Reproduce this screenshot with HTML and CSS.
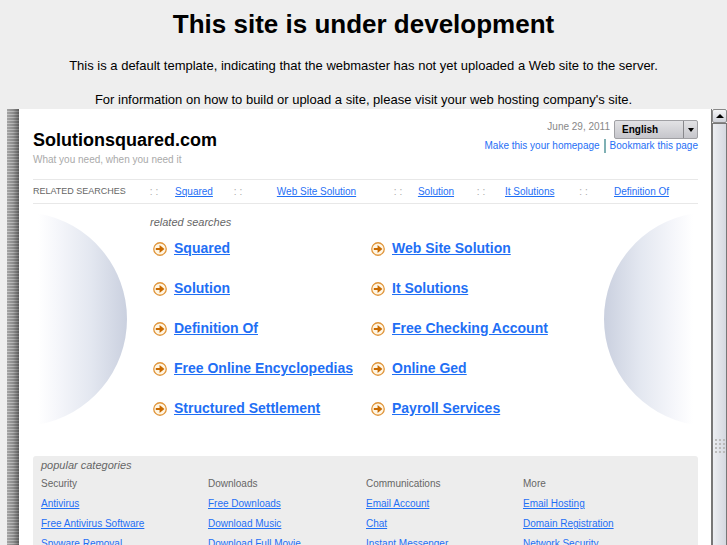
FILE: index.html
```
<!DOCTYPE html>
<html lang="en">
<head>
	<meta charset="UTF-8">
	<meta name="viewport" content="width=device-width">
	<title>This site is under development</title>

	<link rel="stylesheet" href="styles.css">
</head>

<body>

<header class="notice">
	<h1>This site is under development</h1>
	<p>This is a default template, indicating that the webmaster has not yet uploaded a Web site to the server.</p>
	<p>For information on how to build or upload a site, please visit your web hosting company's site.</p>
</header>

<!-- shared shapes -->
<svg class="defs" width="0" height="0" aria-hidden="true">
	<symbol id="arrow" viewBox="0 0 13 13">
		<circle cx="6.5" cy="6.5" r="5.8" fill="#fff6e4" stroke="#e0953a" stroke-width="1.2"/>
		<path d="M2.6 5.5h3.5V2.8L10.6 6.5 6.1 10.2V7.5H2.6z" fill="#c96a00"/>
	</symbol>
	<linearGradient id="fade">
		<stop offset="0" stop-color="#fff"/>
		<stop offset="0.2" stop-color="#f6f7fb"/>
		<stop offset="0.6" stop-color="#e3e7f0"/>
		<stop offset="1" stop-color="#cad0df"/>
	</linearGradient>
	<symbol id="dome" viewBox="0 0 90 214">
		<path d="M0 1.5A107 107 0 0 1 89 107A107 107 0 0 1 0 212.5z" fill="url(#fade)"/>
	</symbol>
</svg>

<div class="frame">
	<div class="binding"></div>

	<main class="page">
		<div class="masthead">
			<div>
				<h2>Solutionsquared.com</h2>
				<p class="tagline">What you need, when you need it</p>
			</div>
			<div class="tools">
				<div class="tools-row">
					<span class="date">June 29, 2011</span>
					<span class="language">
						<select aria-label="Language">
							<option>English</option>
						</select>
					</span>
				</div>
				<div class="tools-links">
					<a href="#">Make this your homepage</a>
					<a href="#">Bookmark this page</a>
				</div>
			</div>
		</div>

		<nav class="related">
			<span class="related-title">RELATED SEARCHES</span>
			<span class="sep">: :</span><a href="#">Squared</a>
			<span class="sep">: :</span><a href="#">Web Site Solution</a>
			<span class="sep">: :</span><a href="#">Solution</a>
			<span class="sep">: :</span><a href="#">It Solutions</a>
			<span class="sep">: :</span><a href="#">Definition Of</a>
		</nav>

		<section class="searches">
			<svg class="dome" aria-hidden="true"><use href="#dome"/></svg>
			<div class="searches-body">
				<h3>related searches</h3>
				<ul>
					<li><svg class="arrow" aria-hidden="true"><use href="#arrow"/></svg><a href="#">Squared</a></li>
					<li><svg class="arrow" aria-hidden="true"><use href="#arrow"/></svg><a href="#">Web Site Solution</a></li>
					<li><svg class="arrow" aria-hidden="true"><use href="#arrow"/></svg><a href="#">Solution</a></li>
					<li><svg class="arrow" aria-hidden="true"><use href="#arrow"/></svg><a href="#">It Solutions</a></li>
					<li><svg class="arrow" aria-hidden="true"><use href="#arrow"/></svg><a href="#">Definition Of</a></li>
					<li><svg class="arrow" aria-hidden="true"><use href="#arrow"/></svg><a href="#">Free Checking Account</a></li>
					<li><svg class="arrow" aria-hidden="true"><use href="#arrow"/></svg><a href="#">Free Online Encyclopedias</a></li>
					<li><svg class="arrow" aria-hidden="true"><use href="#arrow"/></svg><a href="#">Online Ged</a></li>
					<li><svg class="arrow" aria-hidden="true"><use href="#arrow"/></svg><a href="#">Structured Settlement</a></li>
					<li><svg class="arrow" aria-hidden="true"><use href="#arrow"/></svg><a href="#">Payroll Services</a></li>
				</ul>
			</div>
			<svg class="dome dome-right" aria-hidden="true"><use href="#dome"/></svg>
		</section>

		<section class="popular">
			<h3>popular categories</h3>
			<div class="popular-columns">
				<div>
					<h4>Security</h4>
					<a href="#">Antivirus</a>
					<a href="#">Free Antivirus Software</a>
					<a href="#">Spyware Removal</a>
				</div>
				<div>
					<h4>Downloads</h4>
					<a href="#">Free Downloads</a>
					<a href="#">Download Music</a>
					<a href="#">Download Full Movie</a>
				</div>
				<div>
					<h4>Communications</h4>
					<a href="#">Email Account</a>
					<a href="#">Chat</a>
					<a href="#">Instant Messenger</a>
				</div>
				<div>
					<h4>More</h4>
					<a href="#">Email Hosting</a>
					<a href="#">Domain Registration</a>
					<a href="#">Network Security</a>
				</div>
			</div>
		</section>
	</main>

	<div class="scrollbar">
		<button type="button" aria-label="Scroll up"></button>
		<div class="thumb"><span class="grip"></span></div>
	</div>
</div>

</body>
</html>
```
FILE: styles.css
```
* { box-sizing: border-box; }

body {
	margin: 0;
	height: 100vh;
	overflow: hidden;
	display: flex;
	flex-direction: column;
	background: #eee;
	color: #000;
	font-family: "Liberation Sans", Arial, sans-serif;
	font-size: 10px;
}

h1, h2, h3, h4, p, ul { margin: 0; padding: 0; }

a { color: #1f6ff5; }

.defs { position: absolute; }

.notice {
	text-align: center;
	padding-top: 9px;
	height: 109px;
	flex: none;
}

.notice h1 {
	font-size: 26px;
	line-height: 30px;
	margin-bottom: 18px;
}

.notice p {
	font-size: 13px;
	line-height: 18px;
	margin-bottom: 16px;
}

.frame {
	flex: 1;
	min-height: 0;
	display: flex;
	margin-left: 7px;
	background: #fff;
	overflow: hidden;
}

.binding {
	width: 12px;
	background:
		linear-gradient(to right, rgba(255,255,255,0.2), rgba(255,255,255,0) 50%, rgba(0,0,0,0.35)),
		repeating-linear-gradient(#8c8c8c 0 2px, #b4b4b4 2px 3px);
}

.page {
	flex: 1;
	min-width: 0;
	padding: 11px 13px 0 14px;
}

/* site name, date and language */
.masthead {
	display: flex;
	justify-content: space-between;
	height: 59px;
}

.masthead h2 {
	font-size: 18px;
	line-height: 20px;
	margin-top: 10px;
}

.tagline {
	color: #aaa;
	line-height: 20px;
}

.tools-row {
	display: flex;
	justify-content: flex-end;
	gap: 4px;
}

.date {
	color: #888;
	line-height: 14px;
}

.language {
	position: relative;
	width: 84px;
	height: 19px;
}

.language select {
	appearance: none;
	width: 100%;
	height: 100%;
	padding: 0 7px;
	border: 1px solid #a0a0a4;
	border-radius: 2px;
	background: linear-gradient(#e2e2e5, #c6c6cb);
	color: #000;
	font: bold 10px "Liberation Sans", Arial, sans-serif;
}

.language::before {
	content: "";
	position: absolute;
	top: 1px;
	right: 14px;
	bottom: 1px;
	border-left: 1px solid #88888c;
}

.language::after {
	content: "";
	position: absolute;
	top: 8px;
	right: 4px;
	border: 3px solid transparent;
	border-top: 4px solid #000;
	border-bottom: 0;
}

.tools-links {
	display: flex;
	justify-content: flex-end;
	line-height: 14px;
}

.tools-links a { text-decoration: none; }

.tools-links a + a {
	margin-left: 4px;
	padding-left: 4px;
	border-left: 2px solid #7fb0b4;
}

/* strip of links under the site name */
.related {
	display: grid;
	grid-template-columns: 111fr 20fr 60fr 28fr 129fr 34fr 42fr 48fr 48fr 61fr 53fr 31fr;
	height: 25px;
	line-height: 23px;
	border-top: 1px solid #e8e8e8;
	border-bottom: 1px solid #e8e8e8;
	text-align: center;
	white-space: nowrap;
}

.related > * { min-width: 0; }

.related-title {
	color: #666;
	font-size: 9px;
	text-align: left;
}

.sep { color: #aaa; }

/* big links between the two domes */
.searches {
	display: flex;
	padding: 8px 5px 0;
	height: 252px;
}

.dome {
	flex: none;
	width: 90px;
	height: 214px;
}

.dome-right { transform: scaleX(-1); }

.searches-body {
	flex: 1;
	padding: 1px 0 0 22px;
}

.searches h3,
.popular h3 {
	color: #666;
	font-size: 11px;
	font-weight: normal;
	font-style: italic;
	line-height: 18px;
}

.searches ul {
	list-style: none;
	display: grid;
	grid-template-columns: 218px 1fr;
	padding: 7px 0 0 3px;
}

.searches li {
	display: flex;
	gap: 7px;
	height: 40px;
	white-space: nowrap;
	font-size: 14px;
	font-weight: bold;
	line-height: 20px;
}

.arrow {
	flex: none;
	width: 14px;
	height: 14px;
	margin-top: 4px;
}

.popular {
	min-height: 200px;
	padding: 0 8px;
	border-radius: 3px;
	background: #ededed;
}

.popular-columns {
	display: grid;
	grid-template-columns: 167fr 158fr 157fr 167fr;
}

.popular h4,
.popular a {
	display: block;
	width: max-content;
	line-height: 20px;
	font-size: 10px;
	font-weight: normal;
}

.popular h4 { color: #666; }

/* scrollbar of the inner window */
.scrollbar {
	display: flex;
	flex-direction: column;
	width: 16px;
	border-left: 1px solid #777;
}

.scrollbar button {
	flex: none;
	display: grid;
	place-items: center;
	height: 14px;
	padding: 0;
	border: 1px solid #888;
	border-radius: 2px;
	background: linear-gradient(#f4f5f7, #cfd2da);
}

.scrollbar button::before {
	content: "";
	border: 4px solid transparent;
	border-bottom: 4px solid #000;
	border-top: 0;
}

.thumb {
	position: relative;
	flex: 1;
	border: 1px solid #777;
	border-bottom: 0;
	background: linear-gradient(to right, #eceef2, #d5d8e0);
}

/* the thumb runs past the bottom edge, its grip does not sit in the visible middle */
.grip {
	position: absolute;
	left: 2px;
	bottom: 90px;
	width: 10px;
	height: 16px;
	background: radial-gradient(circle at 1px 1px, #bbb 1px, transparent 1px) 0 0 / 4px 4px;
}
```
